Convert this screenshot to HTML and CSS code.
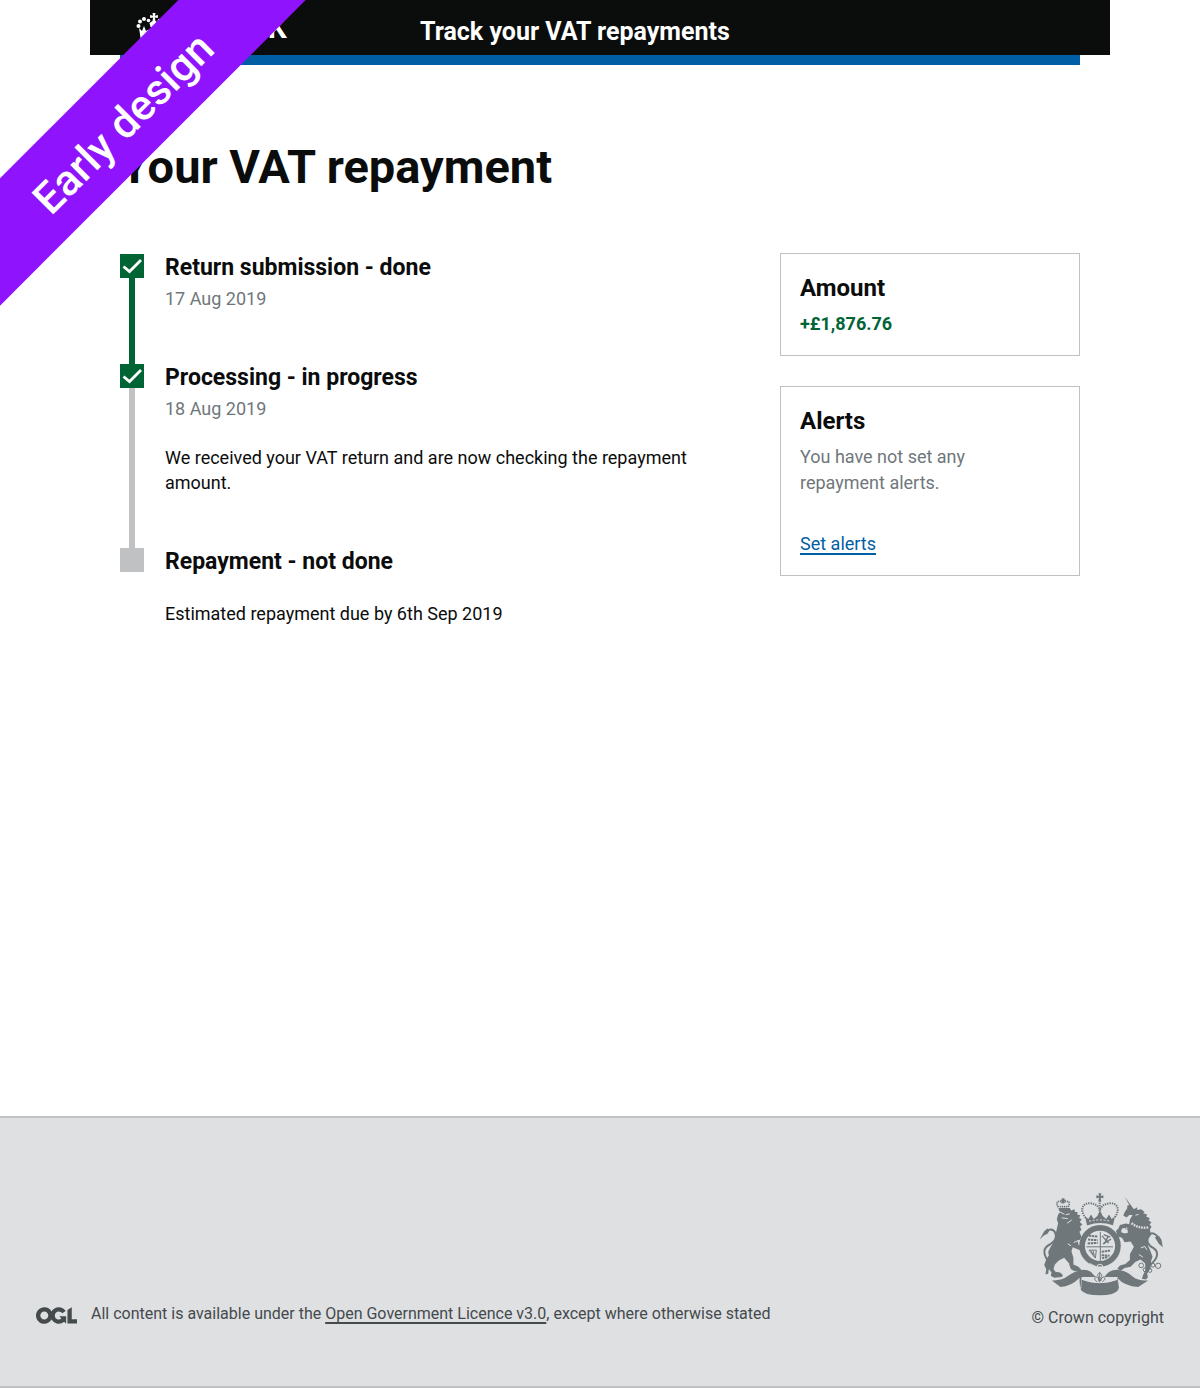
FILE: index.html
```html
<!DOCTYPE html>
<html lang="en">
<head>
<meta charset="utf-8">
<meta name="viewport" content="width=device-width, initial-scale=1">
<title>Track your VAT repayments</title>
<link rel="stylesheet" href="styles.css">
</head>
<body>
<div class="ribbon"><span class="ribbon-band">Early design</span></div>

<header class="header">
  <div class="header-bar">
    <a class="logo" href="#">
      <svg class="logo-crown" viewBox="0 0 36 30" aria-hidden="true">
        <g fill="#fff">
          <circle cx="2.500" cy="13" r="2"/><circle cx="4" cy="8.500" r="2"/><circle cx="8" cy="6" r="2"/><circle cx="12.500" cy="7.500" r="1.800"/>
          <circle cx="33.500" cy="13" r="2"/><circle cx="32" cy="8.500" r="2"/><circle cx="28" cy="6" r="2"/><circle cx="23.500" cy="7.500" r="1.800"/>
          <path d="M16.500 0h3l-.6 2.700 3-.6v3l-3-.6.6 3.500 3 2-1 4-3.500 1-3.500-1-1-4 3-2 .6-3.500-3 .6v-3l3 .6z"/>
          <path d="M3 15l3 3 2-5 2 5 4-2 4 3 4-3 4 2 2-5 2 5 3-3-2 13H5z"/>
        </g>
      </svg>
      <span>GOV.UK</span>
    </a>
    <a class="service" href="#">Track your VAT repayments</a>
  </div>
  <div class="header-accent"></div>
</header>

<main class="main">
  <h1 class="title">Your VAT repayment</h1>
  <div class="columns">
    <ol class="steps">
      <li class="step step-done">
        <div class="marker"><span class="marker-box"><svg viewBox="0 0 24 24" aria-hidden="true"><path d="M3.500 12.500l6 5L21 6" fill="none" stroke="#fff" stroke-width="2.800"/></svg></span></div>
        <div class="step-body">
          <h2 class="heading">Return submission - done</h2>
          <p class="date">17 Aug 2019</p>
        </div>
      </li>
      <li class="step">
        <div class="marker"><span class="marker-box marker-checked"><svg viewBox="0 0 24 24" aria-hidden="true"><path d="M3.500 12.500l6 5L21 6" fill="none" stroke="#fff" stroke-width="2.800"/></svg></span></div>
        <div class="step-body">
          <h2 class="heading">Processing - in progress</h2>
          <p class="date">18 Aug 2019</p>
          <p class="detail">We received your VAT return and are now checking the repayment amount.</p>
        </div>
      </li>
      <li class="step">
        <div class="marker"><span class="marker-box"></span></div>
        <div class="step-body">
          <h2 class="heading">Repayment - not done</h2>
          <p class="detail">Estimated repayment due by 6th Sep 2019</p>
        </div>
      </li>
    </ol>
    <aside class="cards">
      <section class="card">
        <h2 class="heading">Amount</h2>
        <p class="amount">+£1,876.76</p>
      </section>
      <section class="card">
        <h2 class="heading">Alerts</h2>
        <p class="hint">You have not set any repayment alerts.</p>
        <a class="link" href="#">Set alerts</a>
      </section>
    </aside>
  </div>
</main>

<footer class="footer">
  <div class="licence">
    <svg class="ogl" viewBox="0 0 483.2 195.7" role="img" aria-label="OGL"><path fill="#454a4d" d="M421.5 142.8V.1l-50.7 32.3v161.1h112.4v-50.7zm-122.3-9.6A47.12 47.12 0 0 1 221 97.8c0-26 21.1-47.1 47.1-47.1 16.7 0 31.4 8.7 39.7 21.8l42.7-27.2A97.63 97.63 0 0 0 268.1 0c-36.5 0-68.3 20.1-85.1 49.7A98 98 0 0 0 97.8 0C43.9 0 0 43.9 0 97.8s43.9 97.8 97.8 97.8c36.5 0 68.3-20.1 85.1-49.7a97.76 97.76 0 0 0 149.6 25.4l19.4 22.2h3v-87.8h-80l24.3 27.5zM97.8 145c-26 0-47.1-21.1-47.1-47.1s21.1-47.1 47.1-47.1 47.1 21.1 47.1 47.1S123.8 145 97.8 145"/></svg>
    <p>All content is available under the <a href="#">Open Government Licence v3.0</a>, except where otherwise stated</p>
  </div>
  <a class="crown" href="#">
    <svg class="arms" viewBox="30 25 375 310" aria-hidden="true">
      <g fill="#6f777b">
        <!-- lion -->
        <path d="M88 70l34 0 4 8 10-4 2 8 8 0-2 8 10 2-4 8 8 4-6 8 8 8-7 6 4 10-6 6 6 14-4 10-8 2 4 14 14 8-2 8-12-2-18-8-4 12 6 20 0 20 14 6 10 10-2 6-20-2-10-6-6-18-14-16-16 8-12 12-4 14 6 8 14 2 8 8-2 6-24 2-10-6 2-10-8-10-2 14-8 2 2-16-6-12 6-16 8-14-2-10 8-16 10-14 6-30 6-26-4-12 4-14 6-8-4-6z"/>
        <path d="M62 238C38 206 42 190 62 180c16-9 22-22 16-36-6-12-20-11-29-2" fill="none" stroke="#6f777b" stroke-width="6"/>
        <path d="M31 166l14-26 10-8 6 6-6 10-12 6z"/>
        <path d="M98 41h8v4h4v5h-4v6h-8v-6h-4v-5h4z"/>
        <!-- unicorn -->
        <path d="M287 36l28 38 10-6 0 8 12-2 10 8-4 4 12 4-3 6 11 5-4 6 9 7-6 5 6 8-5 8 4 16-8 12-2 20 6 12 8 22-4 12-2 24-10 14 2 12-6 6-12-2 4-12 6-12 0-22-14-12-16 8-14 14-18 4-12 8-10-6 8-10 16-4 14-12 0-18 12-22-10-16-18 2-8-14-12-2-6-18 8-8 8 2 0 10 10 4 10-2-2-16-14 2-8 12-6-8 6-14 18-4 10 2 2-14 8-14-10 0-8 8-10-6 4-10 8-12 0-8 6-2z"/>
        <path d="M360 245c28-22 32-42 14-54-18-10-24-24-16-38 10-14 26-4 30 8" fill="none" stroke="#6f777b" stroke-width="6"/>
        <path d="M378 158l12-4 8 12 4 22-12-10z"/>
        <!-- ribbon with the motto -->
        <path d="M68 288q28 2 48-13t46-19q16 0 24 7l14 15-42 0-4 34 10 4-6-26q50 16 110 0l-6 26 8-4-4-34-40 0q14-22 38-22 28 2 48 21 18 14 46 11l-30 20q-40-2-64-28 4 22-4 38-52 24-104 0-6-16-4-38-26 26-58 28z"/>
        <path d="M158 286q54 22 108 0l2 30q-10 17-56 17t-56-17z"/>
        <!-- crown -->
        <path d="M208 26h9l-2 8 8-2v9l-8-2 2 12h-9l2-12-8 2v-9l8 2z"/>
        <path d="M174 122l-6-26 10 7 8-13 8 13 11-9 8-17 8 17 11 9 8-13 8 13 10-7-6 26q-39-14-76 0z"/>
      </g>
      <g fill="none" stroke="#6f777b">
        <path d="M170 100C148 72 164 54 184 56C202 58 210 66 212 78C216 66 224 58 242 56C262 54 278 72 256 100M212 54v26" stroke-width="6" stroke-dasharray="4 3"/>
        <path d="M88 68C76 52 90 44 101 56C114 44 128 52 116 68M92 66h22" stroke-width="5" stroke-dasharray="4 2"/>
        <circle cx="213" cy="184" r="54" stroke-width="17"/>
        <path d="M172 187h80M214 142v88" stroke-width="3"/>
        <path d="M180 154l26 2M177 165l29 2M176 177l30-2M218 202l27-4M218 212l24 2M219 221l18-3" stroke-width="6" stroke-dasharray="7 2"/>
        <path d="M219 154l20 22M238 154l-12 24M246 164l-24 14M224 150l20 8" stroke-width="4"/>
        <path d="M180 197l22 0-3 24zM186 199l10 18M192 199l4 14" stroke-width="3"/>
        <circle cx="294" cy="128" r="6" stroke-width="2"/><circle cx="282" cy="154" r="6" stroke-width="2"/>
        <circle cx="337" cy="243" r="7" stroke-width="3"/><circle cx="349" cy="256" r="6" stroke-width="3"/><circle cx="363" cy="258" r="6" stroke-width="3"/><circle cx="372" cy="242" r="6" stroke-width="3"/><circle cx="388" cy="244" r="8" stroke-width="3"/>
        <path d="M212 264v40M198 286c-4-13 12-10 12 4 0-17-10-18 2-25 12 7 3 8 3 25 0-14 16-17 12-4l-10 10h-10z" stroke-width="3"/>
      </g>
      <g fill="none" stroke="#dee0e2" stroke-width="3">
        <path d="M308 116q22 18 52 12" stroke-width="7" stroke-dasharray="5 3"/>
        <path d="M92 82l14 7M122 88l-12 2M98 100l18 2M128 106l-14 10"/>
        <path d="M320 92l9-3M336 190l12-4 6 10M330 210l12 8M134 174l14-6M116 178l10 6"/>
        <path d="M182 237l20 10M224 250l16-4M205 242q8-5 15 0v12q-8 5-15 0z"/>
        <path d="M180 110q32-8 64 0" stroke-dasharray="6 5"/>
        <path d="M158 284q54 22 108 0"/>
      </g>
    </svg>
    <span>© Crown copyright</span>
  </a>
</footer>
</body>
</html>
```
FILE: styles.css
```css
* { box-sizing: border-box; }

body {
  margin: 0;
  min-height: 100vh;
  display: flex;
  flex-direction: column;
  position: relative;
  background: #fff;
  color: #0b0c0c;
  font-family: Roboto, "Liberation Sans", sans-serif;
  font-size: 18px;
  line-height: 25px;
}

h1, h2, p, ol { margin: 0; padding: 0; }

/* Corner ribbon, laid over the page */
.ribbon {
  position: absolute;
  top: 0;
  left: 0;
  width: 320px;
  height: 320px;
  overflow: hidden;
  pointer-events: none;
  z-index: 1;
}
.ribbon-band {
  position: absolute;
  top: 76px;
  left: -109px;
  width: 460px;
  height: 90px;
  background: #9013fe;
  color: #fff;
  font-size: 43px;
  font-weight: 500;
  line-height: 96px;
  text-align: center;
  transform: rotate(-45deg);
}

.header {
  width: 100%;
  max-width: 1020px;
  margin: 0 auto;
}
.header-bar {
  display: grid;
  grid-template-columns: 284px 1fr;
  align-items: center;
  height: 55px;
  padding: 7px 30px 0 46px;
  background: #0b0c0c;
}
.header-bar a { color: #fff; font-weight: 700; text-decoration: none; }
.logo {
  display: flex;
  align-items: center;
  gap: 10px;
  padding-bottom: 7px;
  font-size: 30px;
}
.logo-crown { width: 36px; height: 30px; }
.service { font-size: 25px; }
.header-accent {
  height: 10px;
  margin: 0 30px;
  background: #005ea5;
}

.main {
  width: 100%;
  max-width: 1020px;
  margin: 0 auto;
  padding: 77px 30px 60px;
}
.title {
  margin-bottom: 61px;
  font-size: 47px;
  line-height: 50px;
}
.columns {
  display: grid;
  grid-template-columns: 1fr 300px;
  gap: 60px;
  align-items: start;
}
.heading { font-size: 24px; line-height: 30px; }

.steps { list-style: none; }
.steps .heading { font-size: 23px; }
.step { display: flex; gap: 21px; }
.marker {
  display: flex;
  flex-direction: column;
  align-items: center;
  width: 24px;
  margin: 1px 0 -1px;
}
.marker-box { width: 24px; height: 24px; background: #bfc1c3; }
.marker-box svg { display: block; }
.step-done .marker-box, .marker-checked { background: #006435; }
.marker::after {
  content: "";
  flex: 1;
  width: 6px;
  background: #bfc1c3;
}
.step-done .marker::after { background: #006435; }
.step:last-child .marker::after { display: none; }
.step-body { flex: 1; padding-bottom: 52px; }
.date { margin-top: 3px; color: #6f777b; }
.detail { margin-top: 24px; }

.cards { display: grid; gap: 30px; }
.card { padding: 19px; border: 1px solid #bfc1c3; }
.amount { margin-top: 8px; color: #006435; font-weight: 700; }
.hint { max-width: 200px; margin: 8px 0 35px; color: #6f777b; line-height: 26px; }
.link { display: block; width: fit-content; color: #005ea5; }
.link, .licence a { text-decoration-thickness: 2px; text-underline-offset: 3px; }

.footer {
  display: flex;
  justify-content: space-between;
  align-items: flex-end;
  margin-top: auto;
  padding: 75px 36px 58px;
  background: #dee0e2;
  border: solid #bfc1c3;
  border-width: 2px 0;
  color: #454a4d;
  font-size: 16px;
  line-height: 20px;
}
.footer a { color: inherit; }
.licence {
  display: flex;
  align-items: flex-end;
  gap: 14px;
  padding-bottom: 4px;
}
.ogl { flex: none; width: 41px; height: 17px; }
.crown {
  display: flex;
  flex-direction: column;
  align-items: flex-end;
  gap: 12px;
  text-decoration: none;
}
.arms { width: 125px; height: 103px; }

@media (max-width: 800px) {
  .columns { grid-template-columns: 1fr; }
  .header-bar { grid-template-columns: auto 1fr; gap: 20px; }
  .footer { flex-direction: column; align-items: center; gap: 40px; }
}
```
